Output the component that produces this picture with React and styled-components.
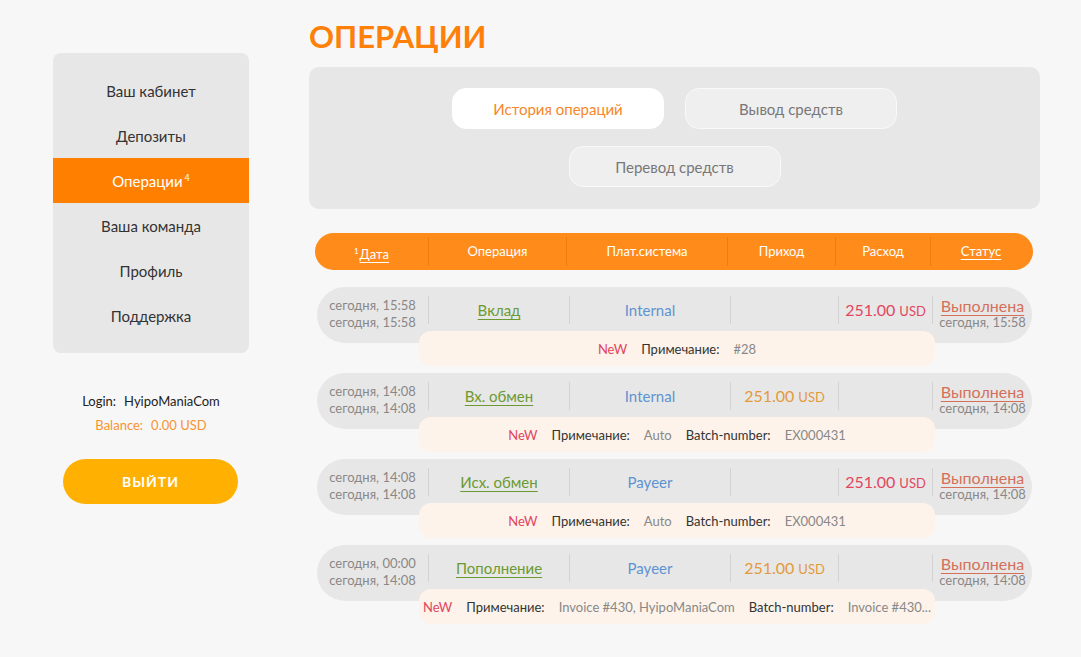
import React from 'react';
import styled, {createGlobalStyle} from 'styled-components';

const GlobalStyle = createGlobalStyle`
  body {
    margin: 0;
    background: #f7f7f7;
    font-family: Lato, 'Open Sans', sans-serif;
    color: #333;
  }
`;

const Page = styled.div`
  display: flex;
  gap: 60px;
  padding: 18px 41px 30px 53px;
`;

const Sidebar = styled.aside`
  width: 196px;
  margin-top: 35px;
  display: flex;
  flex-direction: column;
  align-items: center;
`;

const Menu = styled.nav`
  width: 100%;
  background: #e8e7e7;
  border-radius: 8px;
  padding: 15px 0;
`;

const MenuItem = styled.div`
  height: 45px;
  display: flex;
  align-items: center;
  justify-content: center;
  font-size: 15px;
  color: ${p => (p.$active ? '#fff' : '#333')};
  background: ${p => (p.$active ? '#ff8000' : 'transparent')};
  sup {
    font-size: 9px;
    margin-left: 2px;
    position: relative;
    top: -3px;
  }
`;

const Login = styled.div`
  margin-top: 40px;
  font-size: 13px;
  color: ${p => p.$color || '#222'};
  & + & {
    margin-top: 8px;
  }
  span {
    margin-left: 8px;
  }
`;

const Logout = styled.button`
  margin: 26px 1px 0 0;
  width: 175px;
  height: 45px;
  border: none;
  border-radius: 23px;
  background: #ffb000;
  color: #fff;
  font-family: inherit;
  font-size: 14px;
  font-weight: 700;
  letter-spacing: 1px;
  text-transform: uppercase;
`;

const Main = styled.main`
  width: 731px;
`;

const Title = styled.h1`
  margin: 0;
  height: 49px;
  font-size: 31px;
  font-weight: 700;
  color: #ff8008;
  line-height: 36px;
`;

const TabPanel = styled.div`
  background: #e8e7e7;
  border-radius: 10px;
  padding: 21px 0 22px;
  display: flex;
  flex-direction: column;
  gap: 17px;
`;

const TabRow = styled.div`
  display: flex;
  gap: 21px;
  justify-content: center;
`;

const Tab = styled.div`
  width: 212px;
  height: 41px;
  box-sizing: border-box;
  border-radius: 14px;
  display: flex;
  align-items: center;
  justify-content: center;
  font-size: 15px;
  background: ${p => (p.$active ? '#fff' : '#efefef')};
  border: 1px solid ${p => (p.$active ? '#fff' : '#f9f9f9')};
  color: ${p => (p.$active ? '#f7872a' : '#777')};
`;

const Header = styled.div`
  margin: 24px 7px 0 6px;
  height: 37px;
  background: #ff8c1a;
  border-radius: 19px;
  display: grid;
  grid-template-columns: 113px 138px 161px 108px 95px 101px;
  align-items: center;
`;

const HeadCell = styled.div`
  text-align: center;
  color: #fff;
  font-size: 13px;
  height: 29px;
  line-height: 29px;
  border-left: ${p => (p.$first ? 'none' : '1px solid #ee7d0c')};
  u {
    text-decoration-thickness: 1px;
    text-underline-offset: 3px;
  }
  sup {
    font-size: 8px;
    margin-right: 1px;
  }
`;

const Rows = styled.div`
  margin: 17px 8px 0 8px;
  display: flex;
  flex-direction: column;
  gap: 7px;
`;

const Group = styled.div`
  display: flex;
  flex-direction: column;
`;

const Pill = styled.div`
  height: 56px;
  box-sizing: border-box;
  padding-bottom: 10px;
  background: #e8e7e7;
  border-radius: 28px;
  display: grid;
  grid-template-columns: 111px 141px 161px 108px 94px 100px;
  align-items: center;
`;

const Cell = styled.div`
  text-align: center;
  height: 28px;
  display: flex;
  flex-direction: column;
  align-items: center;
  justify-content: center;
  border-left: ${p => (p.$first ? 'none' : '1px solid #d2d2d2')};
  font-size: ${p => p.$size || '15px'};
  color: ${p => p.$color || '#888'};
  line-height: 17px;
  white-space: nowrap;
  padding-top: ${p => p.$shift || '0'};
  box-sizing: border-box;
  u {
    text-decoration-thickness: 1px;
    text-underline-offset: 3px;
  }
`;

const Small = styled.span`
  font-size: 13px;
  color: ${p => p.$color || '#888'};
  margin-left: ${p => p.$ml || '0'};
`;

const Note = styled.div`
  position: relative;
  margin: -12px 0 0 102px;
  width: 516px;
  height: 35px;
  background: #fdf3ea;
  border-radius: 12px;
  display: flex;
  align-items: center;
  justify-content: center;
  gap: 14px;
  font-size: 13px;
  white-space: nowrap;
`;

const NoteItem = styled.span`
  color: ${p => p.$color || '#888'};
`;

const ops = [
  {
    d1: 'сегодня, 15:58', d2: 'сегодня, 15:58', op: 'Вклад', sys: 'Internal', out: '251.00', st: 'сегодня, 15:58',
    note: [['Примечание:', '#28']],
  },
  {
    d1: 'сегодня, 14:08', d2: 'сегодня, 14:08', op: 'Вх. обмен', sys: 'Internal', inc: '251.00', st: 'сегодня, 14:08',
    note: [['Примечание:', 'Auto'], ['Batch-number:', 'EX000431']],
  },
  {
    d1: 'сегодня, 14:08', d2: 'сегодня, 14:08', op: 'Исх. обмен', sys: 'Payeer', out: '251.00', st: 'сегодня, 14:08',
    note: [['Примечание:', 'Auto'], ['Batch-number:', 'EX000431']],
  },
  {
    d1: 'сегодня, 00:00', d2: 'сегодня, 14:08', op: 'Пополнение', sys: 'Payeer', inc: '251.00', st: 'сегодня, 14:08',
    note: [['Примечание:', 'Invoice #430, HyipoManiaCom'], ['Batch-number:', 'Invoice #430...']],
  },
];

const menu = ['Ваш кабинет', 'Депозиты', 'Операции', 'Ваша команда', 'Профиль', 'Поддержка'];

const App = () => (
  <>
    <GlobalStyle />
    <Page>
      <Sidebar>
        <Menu>
          {menu.map(m => (
            <MenuItem key={m} $active={m === 'Операции'}>
              {m}
              {m === 'Операции' && <sup>4</sup>}
            </MenuItem>
          ))}
        </Menu>
        <Login>Login:<span>HyipoManiaCom</span></Login>
        <Login $color="#f7942f">Balance:<span>0.00 USD</span></Login>
        <Logout>Выйти</Logout>
      </Sidebar>
      <Main>
        <Title>ОПЕРАЦИИ</Title>
        <TabPanel>
          <TabRow>
            <Tab $active>История операций</Tab>
            <Tab>Вывод средств</Tab>
          </TabRow>
          <TabRow>
            <Tab>Перевод средств</Tab>
          </TabRow>
        </TabPanel>
        <Header>
          <HeadCell $first><sup>1</sup><u>Дата</u></HeadCell>
          <HeadCell>Операция</HeadCell>
          <HeadCell>Плат.система</HeadCell>
          <HeadCell>Приход</HeadCell>
          <HeadCell>Расход</HeadCell>
          <HeadCell><u>Статус</u></HeadCell>
        </Header>
        <Rows>
          {ops.map((o, i) => (
            <Group key={i}>
              <Pill>
                <Cell $first $size="13px" $shift="8px">
                  <span>{o.d1}</span>
                  <span>{o.d2}</span>
                </Cell>
                <Cell $color="#6b9a32"><u>{o.op}</u></Cell>
                <Cell $color="#5d93d1">{o.sys}</Cell>
                <Cell $color="#e29a3a" $size="16px">
                  {o.inc && <span>{o.inc}<Small $color="#e29a3a" $ml="4px">USD</Small></span>}
                </Cell>
                <Cell $color="#e2465f" $size="16px">
                  {o.out && <span>{o.out}<Small $color="#e2465f" $ml="4px">USD</Small></span>}
                </Cell>
                <Cell $color="#d4705a" $size="16px" $shift="8px">
                  <u>Выполнена</u>
                  <Small>{o.st}</Small>
                </Cell>
              </Pill>
              <Note>
                <NoteItem $color="#e2465f">NeW</NoteItem>
                {o.note.map(([k, v]) => (
                  <React.Fragment key={k}>
                    <NoteItem $color="#333">{k}</NoteItem>
                    <NoteItem>{v}</NoteItem>
                  </React.Fragment>
                ))}
              </Note>
            </Group>
          ))}
        </Rows>
      </Main>
    </Page>
  </>
);

export default App;
